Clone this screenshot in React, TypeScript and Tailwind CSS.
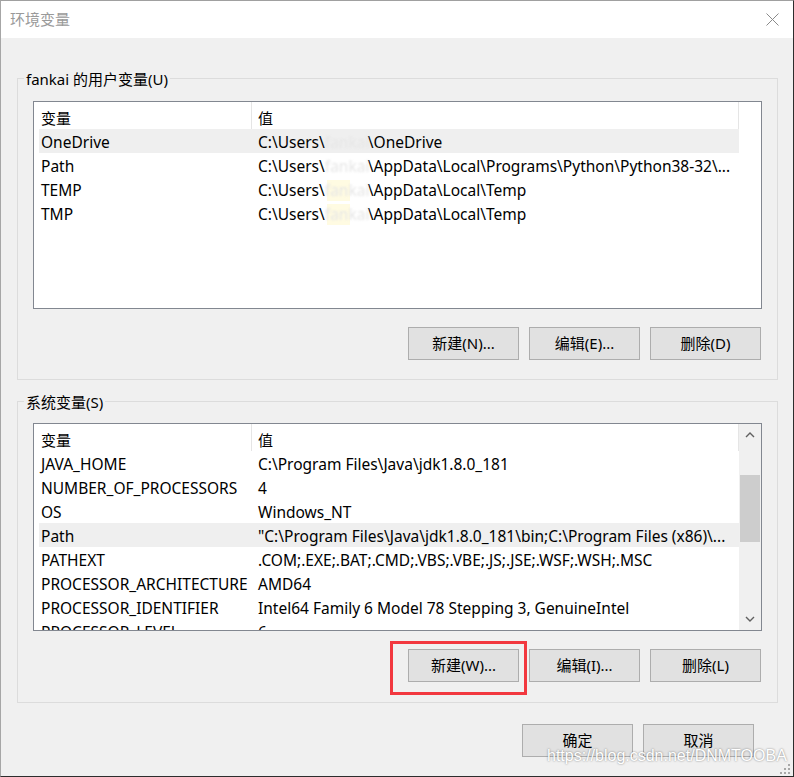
import type { ReactNode } from "react";

type Row = { name: string; value: ReactNode; active?: boolean };

function Masked({ yellow }: { yellow?: boolean }) {
  return (
    <span className="relative self-stretch w-[43px] shrink-0 flex items-center">
      {yellow && <span className="absolute left-[2px] top-0 bottom-0 w-[23px] bg-[#fffbe2]" />}
      <span className="relative text-[#e6e6e6] blur-[1px]">fankai</span>
    </span>
  );
}

function UserPath({ tail, yellow }: { tail: string; yellow?: boolean }) {
  return (
    <>
      <span>C:\Users\</span>
      <Masked yellow={yellow} />
      <span>{tail}</span>
    </>
  );
}

const userRows: Row[] = [
  { name: "OneDrive", value: <UserPath tail="\OneDrive" />, active: true },
  { name: "Path", value: <UserPath tail="\AppData\Local\Programs\Python\Python38-32\..." /> },
  { name: "TEMP", value: <UserPath tail="\AppData\Local\Temp" yellow /> },
  { name: "TMP", value: <UserPath tail="\AppData\Local\Temp" yellow /> },
];

const sysRows: Row[] = [
  { name: "JAVA_HOME", value: "C:\\Program Files\\Java\\jdk1.8.0_181" },
  { name: "NUMBER_OF_PROCESSORS", value: "4" },
  { name: "OS", value: "Windows_NT" },
  { name: "Path", value: "\"C:\\Program Files\\Java\\jdk1.8.0_181\\bin;C:\\Program Files (x86)\\...", active: true },
  { name: "PATHEXT", value: ".COM;.EXE;.BAT;.CMD;.VBS;.VBE;.JS;.JSE;.WSF;.WSH;.MSC" },
  { name: "PROCESSOR_ARCHITECTURE", value: "AMD64" },
  { name: "PROCESSOR_IDENTIFIER", value: "Intel64 Family 6 Model 78 Stepping 3, GenuineIntel" },
  { name: "PROCESSOR_LEVEL", value: "6" },
];

function Chevron({ down }: { down?: boolean }) {
  return (
    <svg width="10" height="6" viewBox="0 0 10 6">
      <path d={down ? "M1 1L5 5L9 1" : "M1 5L5 1L9 5"} fill="none" stroke="#606060" strokeWidth="1.4" />
    </svg>
  );
}

function VarList({ rows, scroll }: { rows: Row[]; scroll?: boolean }) {
  return (
    <div className="h-[208px] border border-[#828790] bg-white flex overflow-hidden">
      <div className="w-[705px] shrink-0 flex flex-col">
        <div className="h-[27px] shrink-0 flex">
          <div className="w-[218px] border-r border-[#e5e5e5] pl-[7px] pt-[5px] flex items-center">变量</div>
          <div className="flex-1 border-r border-[#e5e5e5] pl-[6px] pt-[5px] flex items-center">值</div>
        </div>
        {rows.map((r) => (
          <div
            key={r.name}
            className={`h-[24px] shrink-0 ml-[5px] pt-[3px] flex items-center whitespace-nowrap text-[15.5px] ${r.active ? "bg-[#efefef]" : ""}`}
          >
            <div className="w-[213px] shrink-0 pl-[2px] overflow-hidden">{r.name}</div>
            <div className="flex-1 h-full pl-[6px] flex items-center overflow-hidden">{r.value}</div>
          </div>
        ))}
      </div>
      {scroll ? (
        <div className="w-[22px] shrink-0 bg-[#f0f0f0] flex flex-col">
          <div className="h-[22px] flex items-center justify-center">
            <Chevron />
          </div>
          <div className="h-[29px]" />
          <div className="h-[67px] mx-[1px] bg-[#cdcdcd]" />
          <div className="flex-1" />
          <div className="h-[22px] flex items-center justify-center">
            <Chevron down />
          </div>
        </div>
      ) : (
        <div className="w-[22px] shrink-0" />
      )}
    </div>
  );
}

function Btn({ children }: { children: ReactNode }) {
  return (
    <button className="w-[111px] h-[33px] bg-[#e1e1e1] border border-[#adadad] flex items-center justify-center leading-none">
      {children}
    </button>
  );
}

function Group({ label, children, className }: { label: string; children: ReactNode; className?: string }) {
  return (
    <div className={`relative ml-[16px] w-[761px] border border-[#dcdcdc] px-[15px] ${className ?? ""}`}>
      <span className="absolute left-[6px] top-[-10px] bg-[#f0f0f0] px-[2px] leading-[20px]">{label}</span>
      {children}
    </div>
  );
}

export default function App() {
  return (
    <div className="relative w-[794px] h-[777px] overflow-hidden bg-[#f0f0f0] border-t border-l border-r border-b border-t-[#a0a0a0] border-l-[#a6a6a6] border-r-[#2d2d2d] border-b-[#2d2d2d] flex flex-col text-[15px] text-black font-['Noto_Sans','Noto_Sans_CJK_SC',sans-serif]">
      <div className="h-[37px] shrink-0 bg-white flex items-center justify-between pl-[9px] pr-[14px]">
        <span className="text-[#9a9a9a]">环境变量</span>
        <svg width="13" height="13" viewBox="0 0 13 13">
          <path d="M0.5 0.5L12.5 12.5M12.5 0.5L0.5 12.5" stroke="#8a8a8a" strokeWidth="1" />
        </svg>
      </div>

      <Group label="fankai 的用户变量(U)" className="mt-[40px] pt-[22px] pb-[19px]">
        <VarList rows={userRows} />
        <div className="mt-[18px] flex justify-end gap-[10px] pr-[1px]">
          <Btn>新建(N)...</Btn>
          <Btn>编辑(E)...</Btn>
          <Btn>删除(D)</Btn>
        </div>
      </Group>

      <Group label="系统变量(S)" className="mt-[21px] pt-[21px] pb-[20px]">
        <VarList rows={sysRows} scroll />
        <div className="mt-[18px] flex justify-end gap-[10px] pr-[1px]">
          <div className="relative">
            <Btn>新建(W)...</Btn>
            <div className="absolute -left-[18px] -top-[8px] -right-[8px] -bottom-[13px] border-[3px] border-[#f2383f] pointer-events-none" />
          </div>
          <Btn>编辑(I)...</Btn>
          <Btn>删除(L)</Btn>
        </div>
      </Group>

      <div className="mt-[21px] flex justify-end gap-[10px] pr-[39px]">
        <Btn>确定</Btn>
        <Btn>取消</Btn>
      </div>

      <span className="absolute left-[546px] top-[746px] font-['Liberation_Sans',sans-serif] text-[16px] leading-[18px] text-white [text-shadow:0_0_2px_rgba(0,0,0,0.5)] whitespace-nowrap">
        https://blog.csdn.net/DNMTOOBA
      </span>

      <svg className="absolute right-[3px] bottom-[2px]" width="10" height="10" viewBox="0 0 10 10">
        <rect x="8" y="0" width="2" height="2" fill="#a8a8a8" />
        <rect x="8" y="4" width="2" height="2" fill="#a8a8a8" />
        <rect x="4" y="4" width="2" height="2" fill="#a8a8a8" />
        <rect x="8" y="8" width="2" height="2" fill="#a8a8a8" />
        <rect x="4" y="8" width="2" height="2" fill="#a8a8a8" />
        <rect x="0" y="8" width="2" height="2" fill="#a8a8a8" />
      </svg>
    </div>
  );
}
